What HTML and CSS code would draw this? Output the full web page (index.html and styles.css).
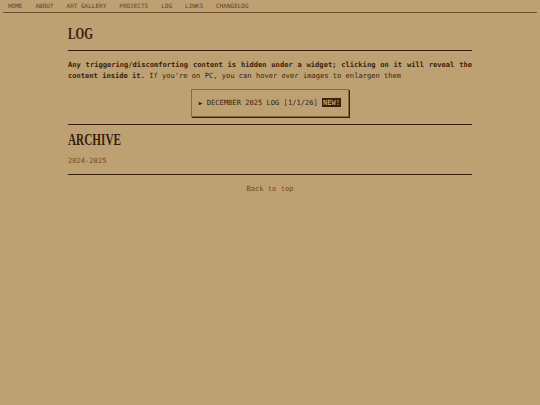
FILE: index.html
```html
<!DOCTYPE html>
<html>
<head>
<meta charset="utf-8">
<link rel="stylesheet" href="styles.css">
</head>
<body>
<nav class="topnav">
  <a href="#">HOME</a>
  <a href="#">ABOUT</a>
  <a href="#">ART GALLERY</a>
  <a href="#">PROJECTS</a>
  <a href="#">LOG</a>
  <a href="#">LINKS</a>
  <a href="#">CHANGELOG</a>
</nav>
<main class="content">
  <h1 class="title first"><span class="narrow">LOG</span></h1>
  <p class="note"><b>Any triggering/discomforting content is hidden under a widget; clicking on it will reveal the content inside it.</b> If you're on PC, you can hover over images to enlargen them</p>
  <div class="entry-wrap">
    <div class="entry"><span class="tri">&#9654;</span> DECEMBER 2025 LOG [1/1/26] <span class="new">NEW!</span></div>
  </div>
  <h2 class="title archive"><span class="narrow">ARCHIVE</span></h2>
  <a class="year" href="#">2024-2025</a>
  <div class="bottom">
    <a class="back" href="#">Back to top</a>
  </div>
</main>
</body>
</html>
```
FILE: styles.css
```css
html, body {
  margin: 0;
  padding: 0;
  background: #bda173;
}
body {
  font-family: "DejaVu Sans Mono", "Liberation Mono", monospace;
  color: #3a1d0c;
}
a { text-decoration: none; }
.topnav {
  margin: 0 3px;
  height: 12px;
  border-bottom: 1px solid #6e4f2e;
  display: flex;
  align-items: center;
  gap: 13px;
  padding-left: 5px;
  font-size: 6px;
}
.topnav a {
  color: #6b3a1e;
  line-height: 12px;
}
.content {
  width: 404px;
  margin: 0 auto;
}
.title {
  font-family: "Liberation Serif", "DejaVu Serif", serif;
  font-weight: bold;
  font-size: 17px;
  line-height: 18px;
  margin: 0;
  color: #3a1d0c;
}
.narrow {
  display: inline-block;
  transform: scaleX(0.66);
  transform-origin: left center;
}
.first {
  padding-top: 12px;
  padding-bottom: 7px;
  border-bottom: 1px solid #3a1d0c;
}
.note {
  font-size: 7.1px;
  line-height: 11px;
  margin: 8px 0 0;
  text-align: justify;
}
.entry-wrap {
  display: flex;
  justify-content: center;
  padding: 8px 0 7px;
  border-bottom: 1px solid #3a1d0c;
}
.entry {
  font-size: 7.1px;
  line-height: 9px;
  padding: 8px 7px 9px 7px;
  border: 1px solid #8a6a45;
  box-shadow: 1px 1px 0 #3a1d0c;
  color: #3a1d0c;
}
.tri { font-size: 6px; }
.new {
  background: #3a1d0c;
  color: #bda173;
  font-weight: bold;
  padding: 0 1px;
}
.archive {
  padding-top: 6px;
}
.year {
  display: block;
  font-size: 7.1px;
  color: #7a4422;
  margin-top: 7px;
  padding-bottom: 9px;
  border-bottom: 1px solid #3a1d0c;
}
.bottom {
  text-align: center;
  padding-top: 8px;
  font-size: 7.1px;
  line-height: 11px;
}
.back {
  color: #7a4422;
}
```
